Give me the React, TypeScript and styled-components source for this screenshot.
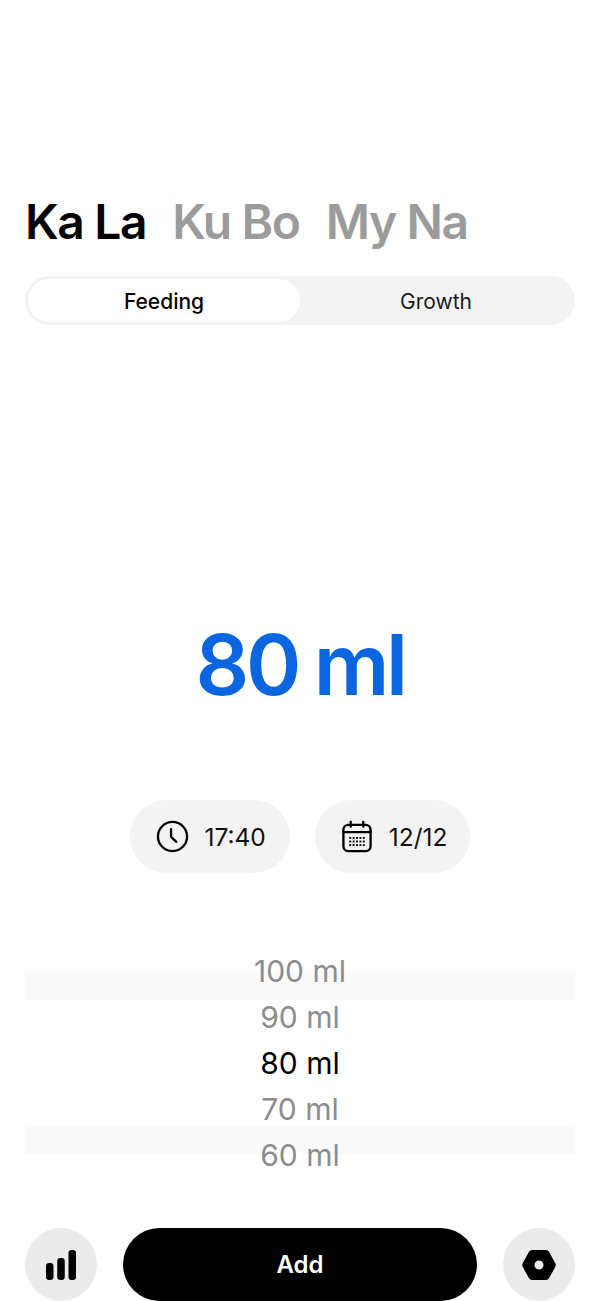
import React from "react";
import styled, { createGlobalStyle } from "styled-components";

const Global = createGlobalStyle`
  html, body { margin: 0; padding: 0; background: #fff; }
  body { font-family: Inter, "Liberation Sans", sans-serif; }
`;

const Page = styled.div`
  width: 600px;
  height: 1301px;
  box-sizing: border-box;
  padding: 194px 25px 0;
  display: flex;
  flex-direction: column;
  overflow: hidden;
`;

const Names = styled.div`
  display: flex;
  gap: 26px;
  height: 56px;
  align-items: center;
`;

const Name = styled.div<{ $active?: boolean }>`
  font-size: 48px;
  font-weight: 600;
  line-height: 56px;
  letter-spacing: -1.4px;
  white-space: nowrap;
  color: ${(p) => (p.$active ? "#000" : "#9b9b9b")};
`;

const Segment = styled.div`
  margin-top: 26px;
  height: 49px;
  box-sizing: border-box;
  padding: 3px;
  border-radius: 25px;
  background: #f3f3f3;
  display: grid;
  grid-template-columns: 272px 1fr;
`;

const SegmentItem = styled.div<{ $active?: boolean }>`
  display: flex;
  align-items: center;
  justify-content: center;
  padding-top: 1px;
  border-radius: 22px;
  font-size: 21px;
  font-weight: ${(p) => (p.$active ? 500 : 400)};
  color: ${(p) => (p.$active ? "#000" : "#1a1a1a")};
  background: ${(p) => (p.$active ? "#fff" : "transparent")};
`;

const Amount = styled.div`
  margin-top: 289px;
  height: 102px;
  line-height: 102px;
  text-align: center;
  font-size: 84px;
  font-weight: 600;
  letter-spacing: -3.4px;
  word-spacing: -2px;
  color: #0a66e0;
`;

const Pills = styled.div`
  margin-top: 84px;
  display: flex;
  justify-content: center;
  gap: 25px;
`;

const Pill = styled.div<{ $gap: number; $right: number }>`
  height: 73px;
  box-sizing: border-box;
  padding: 0 ${(p) => p.$right}px 0 26px;
  border-radius: 37px;
  background: #f3f3f3;
  display: flex;
  align-items: center;
  gap: ${(p) => p.$gap}px;
  font-size: 24.5px;
  color: #111;
`;

const Picker = styled.div`
  margin-top: 76px;
  display: flex;
  flex-direction: column;
  background:
    linear-gradient(#fafafa, #fafafa) 0 22px / 100% 29px no-repeat,
    linear-gradient(#fafafa, #fafafa) 0 176px / 100% 29px no-repeat;
`;

const PickerRow = styled.div<{ $active?: boolean }>`
  height: 46px;
  line-height: 44px;
  text-align: center;
  font-size: 30px;
  font-weight: 400;
  color: ${(p) => (p.$active ? "#000" : "#8c8c8c")};
`;

const Footer = styled.div`
  margin-top: 49px;
  display: flex;
  gap: 26px;
`;

const RoundButton = styled.div`
  width: 72px;
  height: 73px;
  flex: none;
  border-radius: 50%;
  background: #ebebeb;
  display: flex;
  align-items: center;
  justify-content: center;
`;

const AddButton = styled.div`
  flex: 1;
  height: 73px;
  border-radius: 37px;
  background: #000;
  color: #fff;
  display: flex;
  align-items: center;
  justify-content: center;
  font-size: 24px;
  font-weight: 600;
`;

const ClockIcon = () => (
  <svg width="33" height="33" viewBox="0 0 34 34" fill="none" stroke="#000" strokeWidth="2.4" strokeLinecap="round" strokeLinejoin="round">
    <circle cx="17" cy="17" r="15" />
    <path d="M15.5 9.5V17.5L21 22.5" />
  </svg>
);

const CalendarIcon = () => (
  <svg width="32" height="33" viewBox="0 0 32 34" fill="none" stroke="#000" strokeWidth="2.4" strokeLinecap="round">
    <rect x="2" y="5" width="28" height="27" rx="5" />
    <path d="M2 12.5H30M9.5 2V7M22.5 2V7" />
    <g fill="#000" stroke="none">
      {[8, 11.5, 15, 18.5, 22].map((x) =>
        [17.5, 21.2, 24.9].map((y) => <rect key={`${x}-${y}`} x={x} y={y} width="2" height="1.9" />)
      )}
    </g>
  </svg>
);

const BarsIcon = () => (
  <svg width="30" height="30" viewBox="0 0 30 30" fill="#000">
    <rect x="0" y="13" width="7.5" height="17" rx="3.2" />
    <rect x="11.25" y="8" width="7.5" height="22" rx="3.2" />
    <rect x="22.5" y="0" width="7.5" height="30" rx="3" />
  </svg>
);

const HexIcon = () => (
  <svg width="34" height="30" viewBox="0 0 34 30">
    <path
      fillRule="evenodd"
      d="M10 0H24Q26 0 27 1.7L33.2 12.9Q34.3 15 33.2 17.1L27 28.3Q26 30 24 30H10Q8 30 7 28.3L.8 17.1Q-.3 15 .8 12.9L7 1.7Q8 0 10 0ZM17 10.5A4.5 4.5 0 1 0 17 19.5A4.5 4.5 0 1 0 17 10.5Z"
      fill="#000"
    />
  </svg>
);

export default function App() {
  return (
    <Page>
      <Global />
      <Names>
        <Name $active>Ka La</Name>
        <Name>Ku Bo</Name>
        <Name>My Na</Name>
      </Names>
      <Segment>
        <SegmentItem $active>Feeding</SegmentItem>
        <SegmentItem>Growth</SegmentItem>
      </Segment>
      <Amount>80 ml</Amount>
      <Pills>
        <Pill $gap={15} $right={24}>
          <ClockIcon />
          17:40
        </Pill>
        <Pill $gap={16} $right={22}>
          <CalendarIcon />
          12/12
        </Pill>
      </Pills>
      <Picker>
        <PickerRow>100 ml</PickerRow>
        <PickerRow>90 ml</PickerRow>
        <PickerRow $active>80 ml</PickerRow>
        <PickerRow>70 ml</PickerRow>
        <PickerRow>60 ml</PickerRow>
      </Picker>
      <Footer>
        <RoundButton>
          <BarsIcon />
        </RoundButton>
        <AddButton>Add</AddButton>
        <RoundButton>
          <HexIcon />
        </RoundButton>
      </Footer>
    </Page>
  );
}
